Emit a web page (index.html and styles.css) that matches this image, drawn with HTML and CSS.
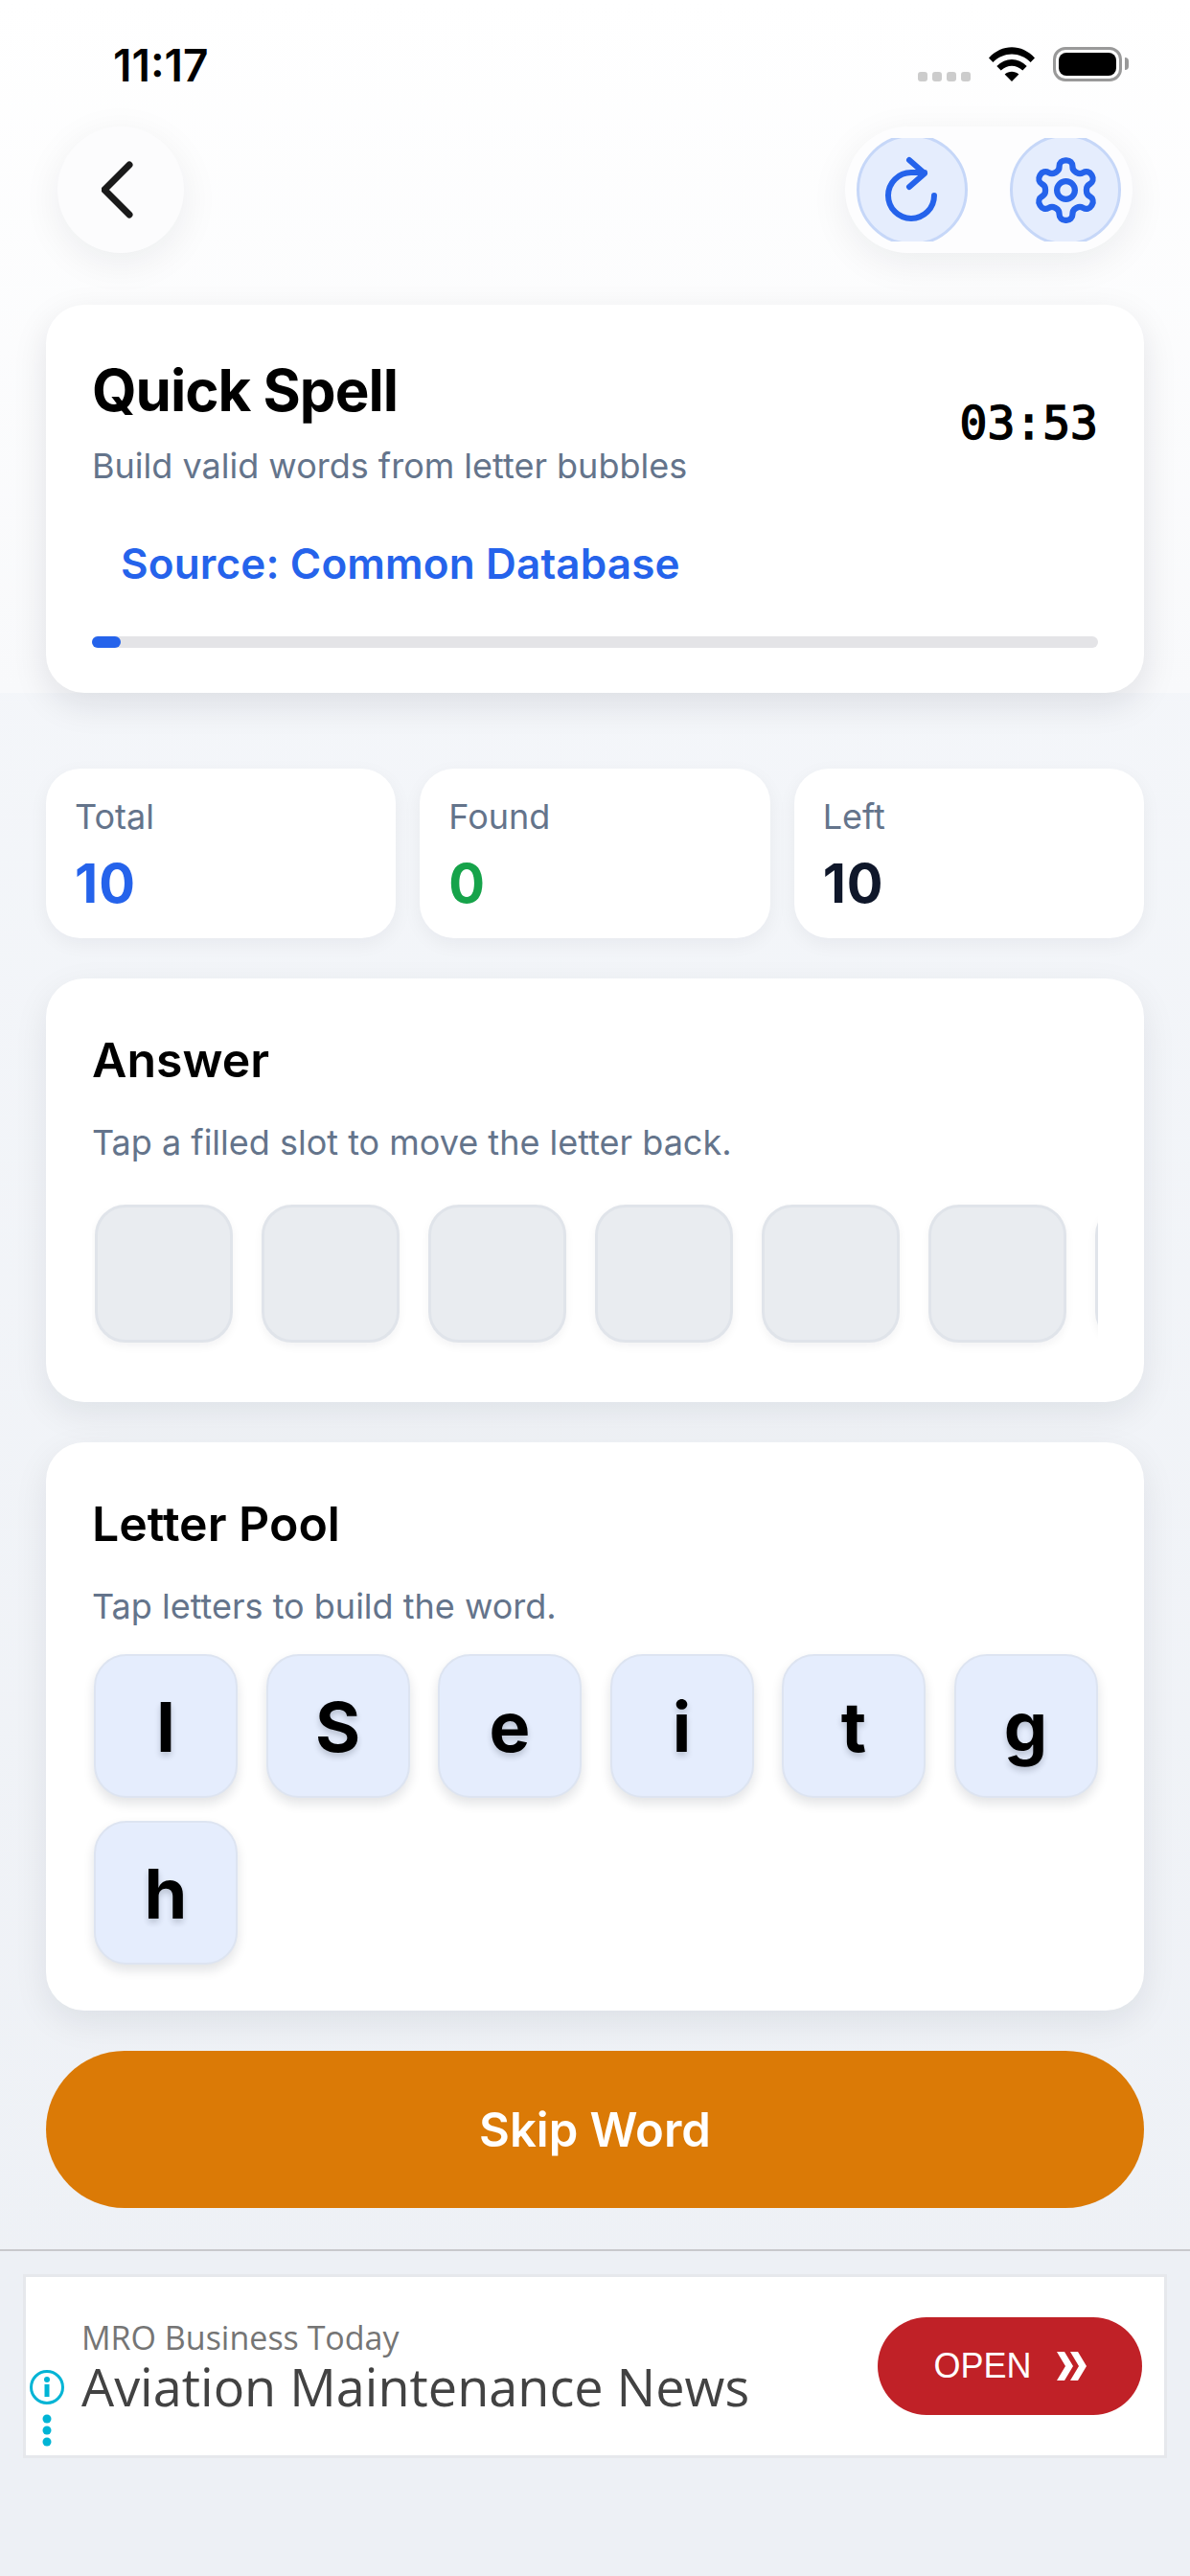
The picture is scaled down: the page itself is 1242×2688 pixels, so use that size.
FILE: index.html
```html
<!DOCTYPE html>
<html lang="en">
<head>
  <meta charset="UTF-8">
  <title>Quick Spell</title>
  <link rel="stylesheet" href="styles.css">
</head>
<body>

<header class="top">
  <div class="status-bar">
    <span class="clock">11:17</span>
    <div class="status-icons">
      <div class="signal"><i></i><i></i><i></i><i></i></div>
      <svg class="wifi" width="48" height="36" viewBox="0 0 48 36">
        <path d="M0 11.5C13.5 -3.5 34.5 -3.5 48 11.5L43.6 16C32.5 4.5 15.5 4.5 4.4 16Z" fill="#000"/>
        <path d="M8.3 20C17.5 10.5 30.5 10.5 39.7 20L35.3 24.5C28.5 18 19.5 18 12.7 24.5Z" fill="#000"/>
        <path d="M16.6 28.6C21 24.8 27 24.8 31.4 28.6L24 36Z" fill="#000"/>
      </svg>
      <div class="battery"><div class="battery-level"></div></div>
    </div>
  </div>

  <nav class="nav-row">
    <button class="back-button">
      <svg width="40" height="64" viewBox="0 0 40 64">
        <path d="M29 6L3 32L29 58" fill="none" stroke="#1a1a1a" stroke-width="7" stroke-linecap="round" stroke-linejoin="round"/>
      </svg>
    </button>
    <div class="action-pill">
      <button class="action-button">
        <svg width="116" height="116" viewBox="0 0 116 116">
          <path d="M81 64A24 24 0 1 1 57 40H71M55 27L71 41L55 55" fill="none" stroke="#2563eb" stroke-width="6" stroke-linecap="round" stroke-linejoin="round"/>
        </svg>
      </button>
      <button class="action-button">
        <svg width="75" height="75" viewBox="0 0 24 24" fill="none" stroke="#2563eb" stroke-width="2" stroke-linecap="round" stroke-linejoin="round">
          <path d="M12.22 2h-.44a2 2 0 0 0-2 2v.18a2 2 0 0 1-1 1.73l-.43.25a2 2 0 0 1-2 0l-.15-.08a2 2 0 0 0-2.73.73l-.22.38a2 2 0 0 0 .73 2.73l.15.1a2 2 0 0 1 1 1.72v.51a2 2 0 0 1-1 1.74l-.15.09a2 2 0 0 0-.73 2.73l.22.38a2 2 0 0 0 2.73.73l.15-.08a2 2 0 0 1 2 0l.43.25a2 2 0 0 1 1 1.73V20a2 2 0 0 0 2 2h.44a2 2 0 0 0 2-2v-.18a2 2 0 0 1 1-1.73l.43-.25a2 2 0 0 1 2 0l.15.08a2 2 0 0 0 2.73-.73l.22-.39a2 2 0 0 0-.73-2.73l-.15-.08a2 2 0 0 1-1-1.74v-.5a2 2 0 0 1 1-1.74l.15-.09a2 2 0 0 0 .73-2.73l-.22-.38a2 2 0 0 0-2.73-.73l-.15.08a2 2 0 0 1-2 0l-.43-.25a2 2 0 0 1-1-1.73V4a2 2 0 0 0-2-2z"/>
          <circle cx="12" cy="12" r="3"/>
        </svg>
      </button>
    </div>
  </nav>

  <section class="game-card">
    <div class="game-head">
      <div>
        <h1 class="game-title">Quick Spell</h1>
        <p class="hint game-sub">Build valid words from letter bubbles</p>
      </div>
      <span class="timer">03:53</span>
    </div>
    <p class="source">Source: Common Database</p>
    <div class="progress"><div class="progress-fill"></div></div>
  </section>
</header>

<main class="content">
  <div class="stats">
    <div class="stat">
      <span class="stat-label">Total</span>
      <strong class="stat-value blue">10</strong>
    </div>
    <div class="stat">
      <span class="stat-label">Found</span>
      <strong class="stat-value green">0</strong>
    </div>
    <div class="stat">
      <span class="stat-label">Left</span>
      <strong class="stat-value navy">10</strong>
    </div>
  </div>

  <section class="panel answer-panel">
    <h2 class="panel-title">Answer</h2>
    <p class="hint panel-hint">Tap a filled slot to move the letter back.</p>
    <div class="slots">
      <div class="slot"></div>
      <div class="slot"></div>
      <div class="slot"></div>
      <div class="slot"></div>
      <div class="slot"></div>
      <div class="slot"></div>
      <div class="slot"></div>
    </div>
  </section>

  <section class="panel pool-panel">
    <h2 class="panel-title">Letter Pool</h2>
    <p class="hint panel-hint">Tap letters to build the word.</p>
    <div class="pool">
      <button class="tile">l</button>
      <button class="tile">S</button>
      <button class="tile">e</button>
      <button class="tile">i</button>
      <button class="tile">t</button>
      <button class="tile">g</button>
      <button class="tile">h</button>
    </div>
  </section>

  <button class="skip-button">Skip Word</button>
</main>

<footer class="ad-area">
  <div class="ad">
    <svg class="ad-info" width="36" height="96" viewBox="0 0 36 96">
      <circle cx="18" cy="18" r="16.5" fill="none" stroke="#00b4d5" stroke-width="3"/>
      <circle cx="18" cy="10" r="3" fill="#00b4d5"/>
      <rect x="15.5" y="15" width="5" height="13" fill="#00b4d5"/>
      <circle cx="18" cy="51" r="4.5" fill="#00b4d5"/>
      <circle cx="18" cy="63" r="4.5" fill="#00b4d5"/>
      <circle cx="18" cy="75" r="4.5" fill="#00b4d5"/>
    </svg>
    <div class="ad-text">
      <span class="ad-brand">MRO Business Today</span>
      <span class="ad-title">Aviation Maintenance News</span>
    </div>
    <button class="ad-open">
      OPEN
      <svg width="31" height="30" viewBox="0 0 31 30">
        <path d="M0 0H8L17 15L8 30H0L9 15ZM14 0H22L31 15L22 30H14L23 15Z" fill="#fff"/>
      </svg>
    </button>
  </div>
</footer>

</body>
</html>
```

FILE: styles.css
```css
* {
  box-sizing: border-box;
}

html,
body {
  margin: 0;
  padding: 0;
}

body {
  width: 1242px;
  height: 2688px;
  overflow: hidden;
  font-family: Inter, "Liberation Sans", sans-serif;
  background: linear-gradient(180deg, #f6f8fb 0%, #edf0f5 100%);
  color: #000;
}

button {
  border: none;
  padding: 0;
  font-family: inherit;
}

h1,
h2,
p {
  margin: 0;
}

/* top area */
.top {
  height: 723px;
  padding: 0 48px;
  background: linear-gradient(180deg, #ffffff 0%, #f8f9fb 100%);
}

.status-bar {
  height: 132px;
  padding: 41px 23px 0 70px;
  display: flex;
  justify-content: space-between;
  align-items: flex-start;
}

.clock {
  font-size: 46px;
  line-height: 54px;
  font-weight: 600;
}

.status-icons {
  display: flex;
  align-items: flex-end;
  margin-top: 8px;
}

.signal {
  display: flex;
  gap: 5px;
  margin-right: 19px;
}

.signal i {
  width: 10px;
  height: 10px;
  border-radius: 3px;
  background: #cccccc;
}

.wifi {
  display: block;
  margin-right: 19px;
}

.battery {
  width: 72px;
  height: 36px;
  padding: 3px;
  position: relative;
  border: 3px solid #999999;
  border-radius: 13px;
}

.battery::after {
  content: "";
  position: absolute;
  right: -10px;
  top: 8px;
  width: 4px;
  height: 13px;
  border-radius: 0 4px 4px 0;
  background: #999999;
}

.battery-level {
  height: 100%;
  border-radius: 8px;
  background: #000;
}

.nav-row {
  padding: 0 12px;
  display: flex;
  justify-content: space-between;
}

.back-button {
  width: 132px;
  height: 132px;
  border-radius: 50%;
  background: #fcfcfd;
  box-shadow: 0 10px 40px rgba(15, 23, 42, 0.07);
  display: flex;
  align-items: center;
  justify-content: center;
}

.action-pill {
  width: 300px;
  height: 132px;
  padding: 12px;
  border-radius: 66px;
  background: #fdfdfe;
  box-shadow: 0 10px 40px rgba(15, 23, 42, 0.07);
  display: flex;
  justify-content: space-between;
  overflow: hidden;
}

.action-button {
  width: 116px;
  height: 116px;
  margin: -4px 0;
  border: 3px solid #c6d7f8;
  border-radius: 50%;
  background: #e5edfd;
  display: flex;
  align-items: center;
  justify-content: center;
  clip-path: inset(4px 0);
}

.action-button svg {
  flex: none;
}

.game-card {
  height: 405px;
  margin-top: 54px;
  padding: 53px 48px 0;
  border-radius: 40px;
  background: #fff;
  box-shadow: 0 12px 36px rgba(15, 23, 42, 0.1);
}

.game-head {
  display: flex;
  justify-content: space-between;
  align-items: center;
}

.game-title {
  font-size: 60px;
  line-height: 72px;
  font-weight: 700;
  letter-spacing: -1px;
}

.hint {
  font-size: 36px;
  line-height: 48px;
  color: #64748b;
}

.game-sub {
  margin-top: 19px;
}

.timer {
  font-family: "DejaVu Sans Mono", monospace;
  font-size: 48px;
  font-weight: 400;
  -webkit-text-stroke: 1.5px #000;
}

.source {
  margin-top: 48px;
  padding-left: 30px;
  font-size: 44px;
  line-height: 60px;
  font-weight: 600;
  letter-spacing: 0.15px;
  color: #2563eb;
}

.progress {
  height: 12px;
  margin-top: 46px;
  border-radius: 6px;
  background: #e4e4e7;
}

.progress-fill {
  width: 30px;
  height: 100%;
  border-radius: 6px;
  background: #2563eb;
}

/* main content */
.content {
  padding: 79px 48px 43px;
  display: flex;
  flex-direction: column;
  gap: 42px;
}

.stats {
  display: grid;
  grid-template-columns: repeat(3, 1fr);
  gap: 25px;
}

.stat {
  padding: 26px 30px 25px;
  border-radius: 36px;
  background: #fff;
  box-shadow: 0 6px 20px rgba(15, 23, 42, 0.05);
  display: flex;
  flex-direction: column;
}

.stat-label {
  font-size: 36px;
  line-height: 48px;
  color: #64748b;
}

.stat-value {
  margin-top: 14px;
  font-size: 56px;
  line-height: 64px;
  font-weight: 700;
  letter-spacing: 1px;
}

.blue {
  color: #2563eb;
}

.green {
  color: #16a34a;
}

.navy {
  color: #0f172a;
}

.panel {
  padding: 55px 48px 48px;
  border-radius: 40px;
  background: #fff;
  box-shadow: 0 12px 36px rgba(15, 23, 42, 0.08);
}

.panel-title {
  font-size: 50px;
  line-height: 60px;
  font-weight: 600;
}

.panel-hint {
  margin-top: 32px;
}

.answer-panel {
  height: 442px;
}

.slots {
  margin-top: 29px;
  padding: 12px 0 20px 3px;
  display: flex;
  gap: 30px;
  overflow: hidden;
}

.slot {
  flex: none;
  width: 144px;
  height: 144px;
  border: 3px solid #e0e4ea;
  border-radius: 32px;
  background: #e9ecf0;
  box-shadow: 0 4px 10px rgba(15, 23, 42, 0.05);
}

.pool {
  margin-top: 26px;
  padding-left: 2px;
  display: flex;
  flex-wrap: wrap;
  gap: 24px 29.5px;
}

.tile {
  width: 150px;
  height: 150px;
  padding-top: 2px;
  border: 2px solid #dde4f1;
  border-radius: 34px;
  background: #e5edfd;
  box-shadow: 0 6px 12px rgba(15, 23, 42, 0.12);
  font-size: 72px;
  line-height: 1;
  font-weight: 700;
  color: #000;
  text-shadow: 0 4px 6px rgba(15, 23, 42, 0.2);
}

.skip-button {
  height: 164px;
  border-radius: 82px;
  background: #db7a06;
  color: #fff;
  font-size: 49px;
  font-weight: 600;
}

/* ad */
.ad-area {
  height: 341px;
  padding: 24px 24px 0;
  border-top: 2px solid #c8c8cc;
  background: #edf0f5;
}

.ad {
  height: 192px;
  padding: 0 23px 0 58px;
  position: relative;
  border: 3px solid #e6e8ec;
  background: #fff;
  display: flex;
  justify-content: space-between;
  align-items: center;
}

.ad-info {
  position: absolute;
  left: 4px;
  top: 97px;
}

.ad-text {
  display: flex;
  flex-direction: column;
  font-family: "Open Sans", sans-serif;
}

.ad-brand {
  font-size: 34px;
  line-height: 41px;
  color: #757575;
}

.ad-title {
  font-size: 54px;
  line-height: 60px;
  color: #424242;
}

.ad-open {
  width: 276px;
  height: 102px;
  border-radius: 51px;
  background: #c02127;
  color: #fff;
  font-family: "Liberation Sans", sans-serif;
  font-size: 36px;
  display: flex;
  align-items: center;
  justify-content: center;
  gap: 26px;
}
```
